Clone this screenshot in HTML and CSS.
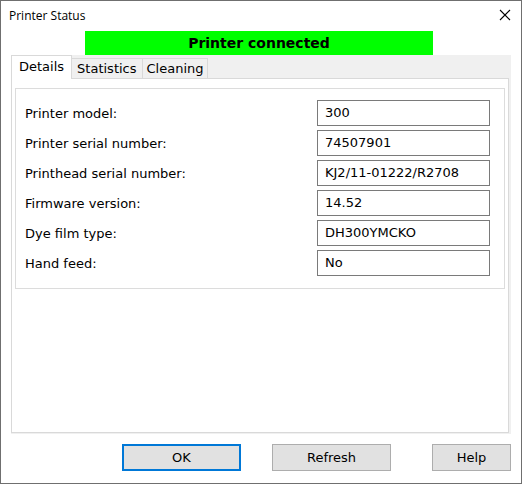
FILE: index.html
```html
<!DOCTYPE html>
<html lang="en">
<head>
    <meta charset="UTF-8">
    <title>Printer Status</title>
    <link rel="stylesheet" href="styles.css">
</head>
<body>
<div class="window">
    <div class="titlebar">
        <span class="title">Printer Status</span>
        <svg class="close" width="12" height="12" viewBox="0 0 12 12">
            <path d="M1 1 L11 11 M11 1 L1 11" stroke="#000" stroke-width="1.1" fill="none"/>
        </svg>
    </div>

    <div class="banner">Printer connected</div>

    <div class="tabs">
        <div class="tab-strip">
            <div class="tab active">Details</div>
            <div class="tab">Statistics</div>
            <div class="tab last">Cleaning</div>
        </div>
        <div class="panel">
            <div class="group">
                <label>Printer model:</label>
                <div class="field">300</div>

                <label>Printer serial number:</label>
                <div class="field">74507901</div>

                <label>Printhead serial number:</label>
                <div class="field">KJ2/11-01222/R2708</div>

                <label>Firmware version:</label>
                <div class="field">14.52</div>

                <label>Dye film type:</label>
                <div class="field">DH300YMCKO</div>

                <label>Hand feed:</label>
                <div class="field">No</div>
            </div>
        </div>
    </div>

    <div class="buttons">
        <button class="btn default">OK</button>
        <button class="btn">Refresh</button>
        <button class="btn help">Help</button>
    </div>
</div>
</body>
</html>
```

FILE: styles.css
```css
body {
    margin: 0;
    background-color: #fff;
    font-family: "DejaVu Sans", Verdana, sans-serif;
    font-size: 12px;
    color: #000;
}

.window {
    width: 522px;
    height: 484px;
    box-sizing: border-box;
    border: 1px solid #6f6f6f;
    background-color: #fff;
}

.titlebar {
    height: 30px;
    display: flex;
    align-items: center;
    justify-content: space-between;
    padding: 0 10px 0 8px;
}

.title {
    font-family: "Open Sans", sans-serif;
    font-size: 12px;
    margin-top: -1px;
}

.close {
    margin-top: -2px;
}

.banner {
    margin-left: 84px;
    width: 348px;
    height: 24px;
    line-height: 24px;
    background-color: #00ff00;
    text-align: center;
    font-weight: bold;
    font-size: 14px;
}

/* tab control */
.tabs {
    margin-left: 10px;
    width: 500px;
    background-color: #f0f0f0;
    padding-bottom: 1px;
}

.tab-strip {
    display: flex;
    align-items: flex-end;
    height: 23px;
}

.tab {
    height: 20px;
    line-height: 20px;
    padding: 0 5px;
    border: 1px solid #d9d9d9;
    border-bottom: none;
    box-sizing: border-box;
    font-size: 13px;
}

.tab + .tab {
    border-left: none;
}

.tab.last {
    padding: 0 3px 0 4px;
}

.tab.active {
    height: 24px;
    line-height: 22px;
    background-color: #fff;
    padding: 0 7px;
    margin-bottom: -1px;
    position: relative;
}

.panel {
    width: 498px;
    height: 355px;
    box-sizing: border-box;
    border: 1px solid #d9d9d9;
    background-color: #fff;
    padding: 9px 0 0 3px;
}

.group {
    width: 490px;
    height: 201px;
    box-sizing: border-box;
    border: 1px solid #dcdcdc;
    padding: 11px 14px 0 9px;
    display: grid;
    grid-template-columns: 1fr 173px;
    grid-auto-rows: 26px;
    row-gap: 4px;
    align-items: center;
    font-size: 13px;
}

.field {
    height: 26px;
    line-height: 24px;
    box-sizing: border-box;
    border: 1px solid #7a7a7a;
    padding-left: 7px;
}

.buttons {
    display: flex;
    margin-top: 10px;
    padding-left: 121px;
}

.btn {
    width: 119px;
    height: 27px;
    background-color: #e1e1e1;
    border: 1px solid #adadad;
    font-family: "DejaVu Sans", Verdana, sans-serif;
    font-size: 13px;
    color: #000;
    padding: 0;
    margin-right: 31px;
}

.btn.default {
    border: 2px solid #0078d7;
}

.btn.help {
    width: 79px;
    margin-left: 10px;
    margin-right: 0;
}
```
